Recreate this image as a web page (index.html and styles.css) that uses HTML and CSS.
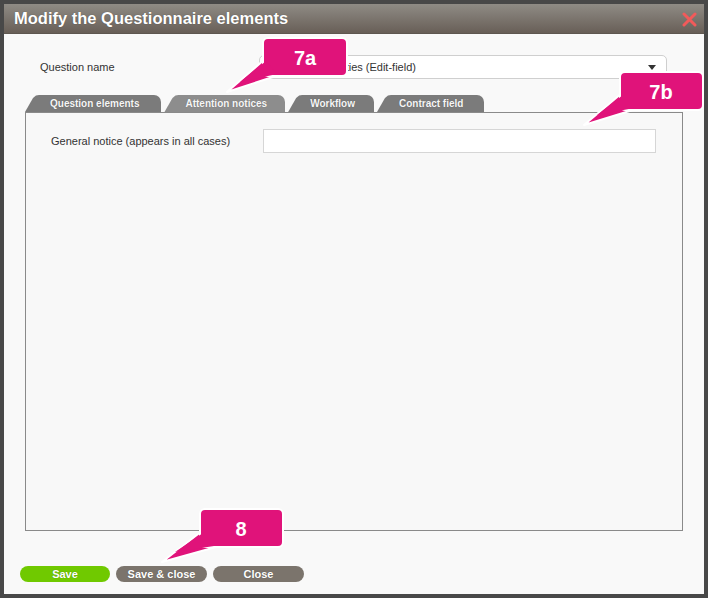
FILE: index.html
```html
<!DOCTYPE html>
<html>
<head>
<meta charset="utf-8">
<link rel="stylesheet" href="styles.css">
</head>
<body>
<div class="dialog">
  <div class="titlebar">
    <span class="title">Modify the Questionnaire elements</span>
    <svg class="close" width="15" height="15" viewBox="0 0 15 15"><path d="M2 2 L13 13 M13 2 L2 13" stroke="#f25a5a" stroke-width="3" stroke-linecap="round"/></svg>
  </div>
  <div class="content">
    <div class="qrow">
      <label class="qlabel">Question name</label>
      <div class="select"><span class="seltext">Other activities (Edit-field)</span><span class="arrow"></span></div>
    </div>
    <div class="tabs">
      <div class="tab t1">Question elements</div>
      <div class="tab t2 active">Attention notices</div>
      <div class="tab t3">Workflow</div>
      <div class="tab t4">Contract field</div>
    </div>
    <div class="panel">
      <div class="frow">
        <label class="flabel">General notice (appears in all cases)</label>
        <div class="input"></div>
      </div>
    </div>
    <div class="buttons">
      <button class="btn save">Save</button>
      <button class="btn grey">Save &amp; close</button>
      <button class="btn grey">Close</button>
    </div>
  </div>
</div>
<svg class="overlay" width="708" height="598" viewBox="0 0 708 598">
  <g class="callout">
    <polygon points="227,92 265,59 279,75" fill="#e0137a" stroke="#fff" stroke-width="2" stroke-linejoin="round"/>
    <rect x="263" y="38" width="84" height="38" rx="5" fill="#e0137a" stroke="#fff" stroke-width="2"/>
    <polygon points="240,82 266,61 277,74" fill="#e0137a"/>
    <text x="305" y="65" class="ctext">7a</text>
  </g>
  <g class="callout">
    <polygon points="584,125 622,93 636,109" fill="#e0137a" stroke="#fff" stroke-width="2" stroke-linejoin="round"/>
    <rect x="620" y="72" width="83" height="38" rx="5" fill="#e0137a" stroke="#fff" stroke-width="2"/>
    <polygon points="597,115 623,95 634,108" fill="#e0137a"/>
    <text x="661" y="99" class="ctext">7b</text>
  </g>
  <g class="callout">
    <polygon points="162,562 202,531 216,547" fill="#e0137a" stroke="#fff" stroke-width="2" stroke-linejoin="round"/>
    <rect x="200" y="509" width="83" height="38" rx="5" fill="#e0137a" stroke="#fff" stroke-width="2"/>
    <polygon points="175,552 203,533 214,546" fill="#e0137a"/>
    <text x="241" y="536" class="ctext">8</text>
  </g>
</svg>
</body>
</html>
```
FILE: styles.css
```css
html, body {
  margin: 0;
  padding: 0;
}
body {
  background: #484848;
  width: 708px;
  height: 598px;
  padding: 4px;
  box-sizing: border-box;
  position: relative;
  font-family: "Liberation Sans", Arial, sans-serif;
  overflow: hidden;
}
.dialog {
  width: 700px;
  height: 590px;
  background: #f9f9f9;
  display: flex;
  flex-direction: column;
}
.titlebar {
  height: 30px;
  flex: none;
  box-sizing: border-box;
  background: linear-gradient(#8f8b85, #685f57);
  border-bottom: 1px solid #5e5750;
  display: flex;
  align-items: center;
  justify-content: space-between;
  padding: 0 7px 0 10px;
}
.title {
  color: #fff;
  font-weight: bold;
  font-size: 16.5px;
  text-shadow: 0 0 1px rgba(0,0,0,0.4);
}
.close {
  display: block;
  margin-top: 1px;
}
.content {
  padding: 21px 21px 0 21px;
  display: flex;
  flex-direction: column;
}
.qrow {
  display: flex;
  align-items: center;
  height: 24px;
}
.qlabel {
  margin-left: 15px;
  width: 219px;
  font-size: 11px;
  color: #333;
}
.select {
  width: 408px;
  height: 24px;
  box-sizing: border-box;
  background: #fff;
  border: 1px solid #cfcfcf;
  border-radius: 5px;
  display: flex;
  align-items: center;
  justify-content: space-between;
  padding: 0 10px 0 30px;
  font-size: 11px;
  color: #333;
}
.arrow {
  width: 0;
  height: 0;
  border-left: 4px solid transparent;
  border-right: 4px solid transparent;
  border-top: 5px solid #333;
}
.tabs {
  display: flex;
  gap: 3px;
  margin-top: 16px;
  height: 17px;
}
.tab {
  height: 17px;
  line-height: 18px;
  background: #7b7b7b;
  color: #f6f6f6;
  font-size: 10px;
  font-weight: bold;
  border-radius: 0 7px 0 0;
  clip-path: polygon(0 100%, 8px 3px, 11px 0.5px, 14px 0, 100% 0, 100% 100%);
  text-shadow: 0 0 1px rgba(0,0,0,0.3);
}
.t1 { padding: 0 22px 0 25px; }
.t2 { padding: 0 18px 0 21px; }
.t3 { padding: 0 19px 0 22px; }
.t4 { padding: 0 21px 0 22px; }
.tab.active {
  background: #8d8d8d;
}
.panel {
  height: 419px;
  box-sizing: border-box;
  border: 1px solid #8a8a8a;
  background: #f8f8f8;
  padding: 16px 25px 0 25px;
}
.frow {
  display: flex;
  align-items: center;
}
.flabel {
  width: 212px;
  font-size: 11px;
  color: #333;
}
.input {
  width: 393px;
  height: 24px;
  box-sizing: border-box;
  background: #fff;
  border: 1px solid #d6d6d6;
}
.buttons {
  display: flex;
  gap: 6px;
  margin-top: 35px;
  margin-left: -5px;
}
.btn {
  height: 16px;
  width: 91px;
  border: none;
  border-radius: 8px;
  padding: 0;
  color: #fff;
  font-family: "Liberation Sans", Arial, sans-serif;
  font-size: 11px;
  font-weight: bold;
  line-height: 16px;
  text-shadow: 0 0 1px rgba(0,0,0,0.35);
}
.btn.save {
  width: 90px;
  background: #70c900;
}
.btn.grey {
  background: #7b746c;
}
.overlay {
  position: absolute;
  left: 0;
  top: 0;
  pointer-events: none;
}
.ctext {
  fill: #fff;
  font-family: "Liberation Sans", Arial, sans-serif;
  font-weight: bold;
  font-size: 20px;
  text-anchor: middle;
}
```
